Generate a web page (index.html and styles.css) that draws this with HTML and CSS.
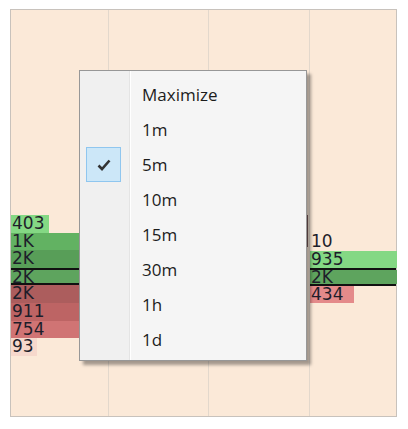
FILE: index.html
```html
<!DOCTYPE html>
<html lang="en">
<head>
  <meta charset="UTF-8">
  <meta name="viewport" content="width=device-width, initial-scale=1.0">
  <title>Chart menu</title>
  <link rel="stylesheet" href="styles.css">
</head>
<body>
  <main class="chart">
    <div class="chart__col chart__col--left">
      <div class="cell"><span class="cell__bar bar--lime" style="width: 38px"></span><span class="cell__text">403</span></div>
      <div class="cell"><span class="cell__bar bar--green" style="width: 98px"></span><span class="cell__text">1K</span></div>
      <div class="cell"><span class="cell__bar bar--dark" style="width: 98px"></span><span class="cell__text">2K</span></div>
      <div class="cell cell--price"><span class="cell__bar bar--mid" style="width: 98px"></span><span class="cell__text">2K</span></div>
      <div class="cell"><span class="cell__bar bar--rust" style="width: 98px"></span><span class="cell__text">2K</span></div>
      <div class="cell"><span class="cell__bar bar--red" style="width: 98px"></span><span class="cell__text">911</span></div>
      <div class="cell"><span class="cell__bar bar--rose" style="width: 98px"></span><span class="cell__text">754</span></div>
      <div class="cell"><span class="cell__bar bar--pale" style="width: 26px"></span><span class="cell__text">93</span></div>
    </div>
    <div class="chart__col"></div>
    <div class="chart__col chart__col--wick">
      <span class="wick"></span>
    </div>
    <div class="chart__col chart__col--right">
      <div class="cell"><span class="cell__text">10</span></div>
      <div class="cell"><span class="cell__bar bar--lime" style="width: 87px"></span><span class="cell__text">935</span></div>
      <div class="cell cell--price"><span class="cell__bar bar--mid" style="width: 87px"></span><span class="cell__text">2K</span></div>
      <div class="cell"><span class="cell__bar bar--salmon" style="width: 44px"></span><span class="cell__text">434</span></div>
    </div>

    <ul class="menu">
      <li class="menu__item">Maximize</li>
      <li class="menu__item">1m</li>
      <li class="menu__item menu__item--checked">
        <span class="menu__check">
          <svg width="14" height="12" viewBox="0 0 14 12"><path d="M1.5 6.5 L5 10 L12.5 1.5" fill="none" stroke="#333" stroke-width="2.6"/></svg>
        </span>
        5m
      </li>
      <li class="menu__item">10m</li>
      <li class="menu__item">15m</li>
      <li class="menu__item">30m</li>
      <li class="menu__item">1h</li>
      <li class="menu__item">1d</li>
    </ul>
  </main>
</body>
</html>
```

FILE: styles.css
```css
*,
*::before,
*::after {
  box-sizing: border-box;
}
body{
  margin: 0;
  padding: 0;
  background: #fff;
}
.chart{
  position: relative;
  display: grid;
  grid-template-columns: 98px 100px 101px 1fr;
  width: 387px;
  height: 408px;
  margin: 9px 0 0 10px;
  background: #fbe9d8;
  border: 1px solid #c8c2bc;
  font-family: "DejaVu Sans", sans-serif;
  font-size: 17px;
  color: #1e1e2a;
}
.chart__col{
  display: flex;
  flex-direction: column;
  border-right: 1px solid #e3d8cc;
}
.chart__col:last-of-type{
  border-right: none;
}
.chart__col--left{
  padding-top: 205px;
}
.chart__col--right{
  padding-top: 223px;
}
.chart__col--wick{
  align-items: flex-end;
  padding-top: 205px;
}
.wick{
  width: 2px;
  height: 32px;
  margin-right: 1px;
  background: #7a5a5a;
}
.cell{
  position: relative;
  height: 17.6px;
  line-height: 17px;
  padding-left: 1px;
}
.cell--price{
  border-top: 2px solid #111;
  border-bottom: 2px solid #111;
  line-height: 14px;
}
.cell__bar{
  position: absolute;
  left: 0;
  top: 0;
  bottom: 0;
}
.cell__text{
  position: relative;
}
.bar--lime{ background: #84d884; }
.bar--green{ background: #62b262; }
.bar--dark{ background: #589e58; }
.bar--mid{ background: #5ea45e; }
.bar--rust{ background: #ac5d5d; }
.bar--red{ background: #bd6464; }
.bar--rose{ background: #d07474; }
.bar--pale{ background: #f6d8cc; }
.bar--salmon{ background: #e48a8a; }

.menu{
  position: absolute;
  left: 68px;
  top: 60px;
  width: 228px;
  height: 291px;
  margin: 0;
  padding: 6px 0 2px;
  list-style: none;
  background: linear-gradient(to right, #f0f0f0 49px, #e4e4e4 49px, #e4e4e4 50px, #fff 50px, #fff 51px, #f5f5f5 51px);
  border: 1px solid #979797;
  box-shadow: 4px 4px 3px rgba(0, 0, 0, 0.35);
  font-family: "Open Sans", sans-serif;
  font-size: 17px;
  color: #1c1c1c;
}
.menu__item{
  position: relative;
  height: 35px;
  line-height: 35px;
  padding-left: 62px;
}
.menu__check{
  position: absolute;
  left: 6px;
  top: 0;
  width: 35px;
  height: 35px;
  display: flex;
  align-items: center;
  justify-content: center;
  background: #cce7f8;
  border: 1px solid #8fc6ef;
}
```
